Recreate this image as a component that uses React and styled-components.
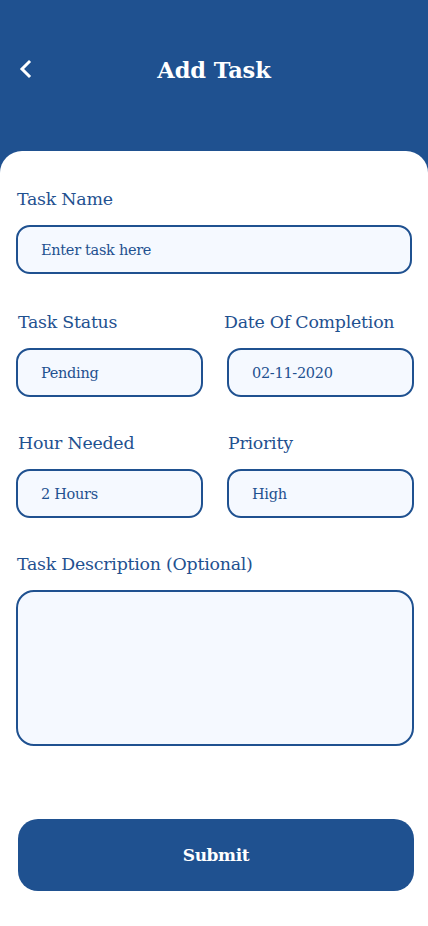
import React from "react";
import styled, { createGlobalStyle } from "styled-components";

const Global = createGlobalStyle`
  html, body { margin: 0; padding: 0; background: #1f5190; }
  * { box-sizing: border-box; }
  body { font-family: "DejaVu Serif", "Liberation Serif", serif; }
`;

const BLUE = "#1f5190";

const Page = styled.div`
  width: 428px;
  min-height: 926px;
  background: ${BLUE};
  display: flex;
  flex-direction: column;
`;

const Header = styled.header`
  height: 151px;
  position: relative;
  display: flex;
  justify-content: center;
  padding-top: 56px;
`;

const Back = styled.button`
  position: absolute;
  left: 14px;
  top: 56px;
  background: none;
  border: none;
  padding: 0;
  width: 22px;
  height: 26px;
  display: flex;
  align-items: center;
  justify-content: center;
`;

const Title = styled.h1`
  margin: 0;
  color: #ffffff;
  font-size: 22.5px;
  font-weight: bold;
  line-height: 28px;
  letter-spacing: -0.1px;
`;

const Card = styled.main`
  flex: 1;
  background: #ffffff;
  border-radius: 22px 22px 0 0;
  padding: 36px 14px 36px 16px;
  display: flex;
  flex-direction: column;
`;

const Field = styled.div`
  display: flex;
  flex-direction: column;
  margin-bottom: ${(p) => p.$mb || 0}px;
`;

const Row = styled.div`
  display: grid;
  grid-template-columns: 187px 187px;
  column-gap: 24px;
  margin-bottom: ${(p) => p.$mb || 0}px;
`;

const Label = styled.label`
  color: ${BLUE};
  font-size: 17.4px;
  line-height: 24px;
  margin-left: ${(p) => p.$ml || 1}px;
  margin-bottom: 14px;
  letter-spacing: -0.25px;
  white-space: nowrap;
`;

const Input = styled.div`
  height: 49px;
  border: 2px solid ${BLUE};
  border-radius: 14px;
  background: #f5f9ff;
  display: flex;
  align-items: center;
  padding-left: 23px;
  color: ${BLUE};
  font-size: 14.5px;
  letter-spacing: -0.3px;
  width: ${(p) => p.$w || "auto"};
`;

const TextArea = styled.div`
  height: 156px;
  border: 2px solid ${BLUE};
  border-radius: 18px;
  background: #f5f9ff;
`;

const Submit = styled.button`
  margin-top: 73px;
  margin-left: 2px;
  height: 72px;
  border: none;
  border-radius: 20px;
  background: ${BLUE};
  color: #ffffff;
  font-family: "DejaVu Serif", "Liberation Serif", serif;
  font-size: 17px;
  font-weight: bold;
  letter-spacing: -0.4px;
`;

export default function App() {
  return (
    <>
      <Global />
      <Page>
        <Header>
          <Back aria-label="Back">
            <svg width="14" height="20" viewBox="0 0 14 20">
              <path d="M11 3 L4 10 L11 17" fill="none" stroke="#fff" strokeWidth="3" strokeLinecap="square" />
            </svg>
          </Back>
          <Title>Add Task</Title>
        </Header>
        <Card>
          <Field $mb={36}>
            <Label>Task Name</Label>
            <Input $w="396px">Enter task here</Input>
          </Field>
          <Row $mb={34}>
            <Field>
              <Label $ml={2}>Task Status</Label>
              <Input>Pending</Input>
            </Field>
            <Field>
              <Label $ml={-3}>Date Of Completion</Label>
              <Input>02-11-2020</Input>
            </Field>
          </Row>
          <Row $mb={34}>
            <Field>
              <Label $ml={2}>Hour Needed</Label>
              <Input>2 Hours</Input>
            </Field>
            <Field>
              <Label $ml={0}>Priority</Label>
              <Input>High</Input>
            </Field>
          </Row>
          <Field>
            <Label>Task Description (Optional)</Label>
            <TextArea />
          </Field>
          <Submit>Submit</Submit>
        </Card>
      </Page>
    </>
  );
}
